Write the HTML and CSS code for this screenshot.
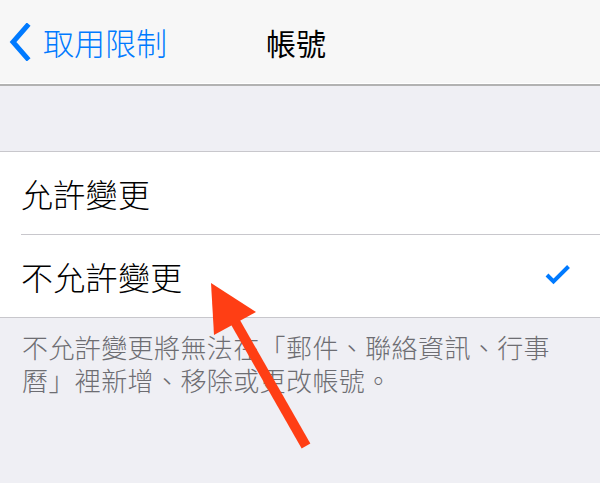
FILE: index.html
```html
<!DOCTYPE html>
<html>
  <head>
    <meta charset="UTF-8">
    <meta name="viewport" content="width=device-width, initial-scale=1.0">
    <title>帳號</title>
    <link rel="stylesheet" href="styles.css">
  </head>
  <body>
  <!-- top bar -->
  <div class="navbar">
    <div class="back">
      <svg class="chevron" width="24" height="38" viewBox="0 0 24 38">
        <path d="M20 3 L6 19 L20 35" fill="none" stroke="#007aff" stroke-width="5" stroke-linecap="square" />
      </svg>
      <span>取用限制</span>
    </div>
    <div class="title">帳號</div>
  </div>

  <div class="gap"></div>

  <div class="group">
    <div class="row">允許變更</div>
    <div class="row">
      <span>不允許變更</span>
      <svg class="check" width="26" height="21" viewBox="0 0 26 21">
        <path d="M2 11 L8.5 17.5 L23.5 2.5" fill="none" stroke="#007aff" stroke-width="4" />
      </svg>
    </div>
  </div>

  <div class="note">不允許變更將無法在「郵件、聯絡資訊、行事曆」裡新增、移除或更改帳號。</div>

  <!-- red arrow drawn over the page -->
  <svg class="arrow" width="600" height="483" viewBox="0 0 600 483">
    <line x1="306" y1="446" x2="233" y2="318" stroke="#ff3e14" stroke-width="10" />
    <polygon points="211,283 256,312 214,335" fill="#ff3e14" />
  </svg>
  </body>
</html>
```

FILE: styles.css
```css
body {
  margin: 0;
  width: 600px;
  height: 483px;
  background-color: #efeff4;
  font-family: "Noto Sans CJK TC", "Noto Sans", sans-serif;
  position: relative;
  overflow: hidden;
}
.navbar {
  height: 84px;
  background-color: #f7f7f7;
  border-bottom: 2px solid #b2b2b2;
  box-shadow: inset 0 -1px 0 #ffffff;
  display: flex;
  align-items: center;
  position: relative;
}
.back {
  display: flex;
  align-items: center;
  color: #007aff;
  font-size: 31px;
  font-weight: 300;
  padding-left: 7px;
  margin-top: -1px;
}
.back span {
  margin-left: 12px;
}
.title {
  position: absolute;
  left: 0;
  right: 0;
  top: 0;
  bottom: 0;
  display: flex;
  align-items: center;
  justify-content: center;
  font-size: 30px;
  color: #000;
  margin-top: -1px;
  padding-right: 8px;
  pointer-events: none;
}
.gap {
  height: 65px;
  background-color: #efeff4;
}
.group {
  background-color: #ffffff;
  border-top: 1px solid #c8c7cc;
  border-bottom: 1px solid #c8c7cc;
  padding-left: 21px;
}
.row {
  height: 82px;
  display: flex;
  align-items: center;
  justify-content: space-between;
  font-size: 32px;
  font-weight: 300;
  color: #000;
  padding-right: 29px;
  letter-spacing: 0.3px;
}
.row + .row {
  border-top: 1px solid #c8c7cc;
}
.check {
  margin-top: -3px;
}
.note {
  padding: 12px 38px 0 22px;
  font-size: 26px;
  font-weight: 300;
  line-height: 33px;
  letter-spacing: 0.4px;
  color: #6d6d72;
}
.arrow {
  position: absolute;
  left: 0;
  top: 0;
}
```
